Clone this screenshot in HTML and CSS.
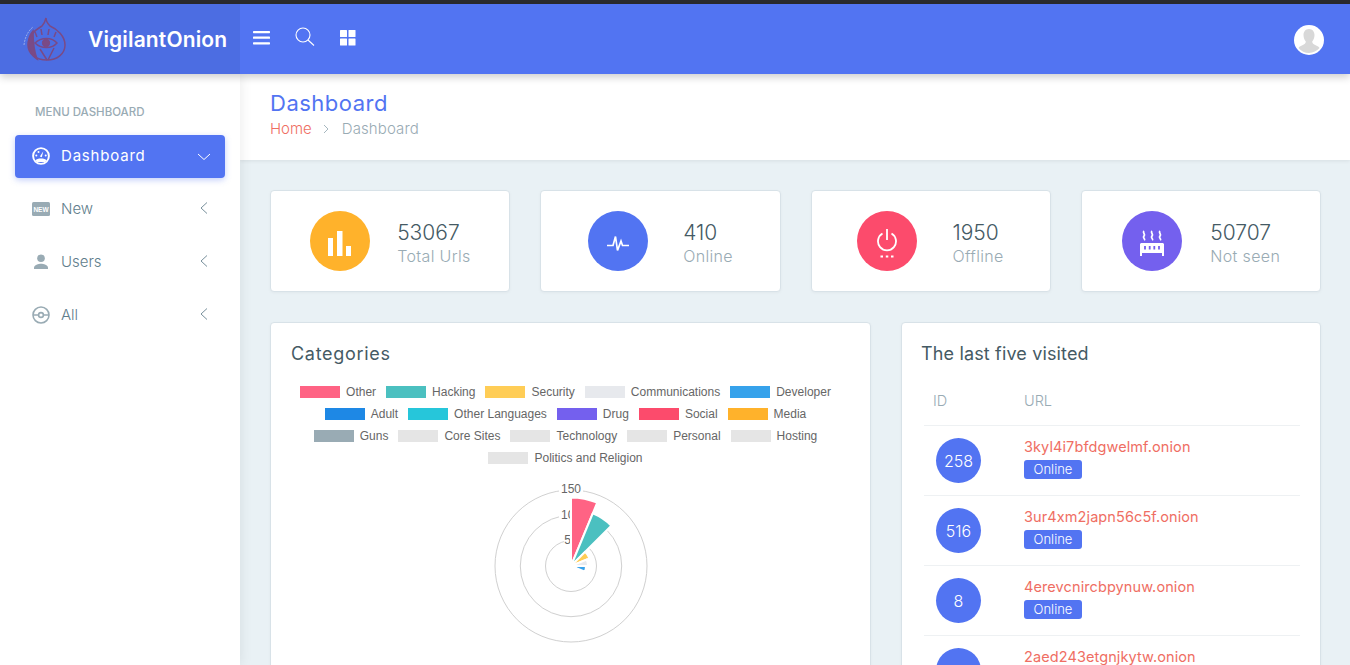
FILE: index.html
```html
<!DOCTYPE html>
<html lang="en">
<head>
<meta charset="utf-8">
<title>VigilantOnion</title>
<link rel="stylesheet" href="styles.css">
</head>
<body>
<div class="strip"></div>
<header class="topbar">
  <div class="brand">
    <svg class="logo" viewBox="0 0 50 50" fill="none" stroke="#7a4a86" stroke-width="1.5">
      <path d="M3 32C4 24 7 18 12 14" stroke="#a9b9ee" stroke-width=".8" stroke-dasharray="2 1"/>
      <path d="M25 5c0 4 2 6 4 8 7 3 15 10 15 19 0 9-8 15-18 15C15 47 7 41 7 32c0-9 7-15 14-19 2-2 3-4 4-8z"/>
      <path d="M12 18C6 25 5 39 16 46c-3-8-4-18-4-28z" fill="#7a4a86"/>
      <path d="M14 30c6-6 17-6 22 0-5 6-16 6-22 0z"/>
      <circle cx="25" cy="30" r="3.400" fill="#7a4a86"/>
      <path d="M16 24l-2-5M21 22l-1-6M27 22l1-6M33 24l2-5M19 36l7 11M33 35l-6 12"/>
    </svg>
    <span class="brand-name">VigilantOnion</span>
  </div>
  <nav class="tools">
    <svg class="tool-menu" viewBox="0 0 18 14" fill="#fff"><rect y="0" width="17" height="2.200" rx=".6"/><rect y="5.600" width="17" height="2.200" rx=".6"/><rect y="11.200" width="17" height="2.200" rx=".6"/></svg>
    <svg class="tool-search" viewBox="0 0 20 20" fill="none" stroke="#fff" stroke-width="1.100"><circle cx="8" cy="8" r="7"/><path d="M13 13l6 5.500"/></svg>
    <svg class="tool-grid" viewBox="0 0 16 16" fill="#fff"><rect width="7" height="7" rx=".5"/><rect x="8.500" width="7" height="7" rx=".5"/><rect y="8.500" width="7" height="7" rx=".5"/><rect x="8.500" y="8.500" width="7" height="7" rx=".5"/></svg>
  </nav>
  <svg class="avatar" viewBox="0 0 30 30"><circle cx="15" cy="15" r="15" fill="#fff"/><path d="M15 4c3.600 0 5.500 2.800 5.500 6 0 2.800-1 5-2.300 6.500 0 2 1.300 2.800 3.500 3.700 2 .8 3.300 1.800 3.800 2.800A15 15 0 0 1 15 28a14 14 0 0 1-10.500-5c.5-1 1.800-2 3.800-2.800 2.200-.9 3.500-1.700 3.500-3.700C10.500 15 9.500 12.800 9.500 10c0-3.200 1.900-6 5.500-6z" fill="#d8d8d8"/></svg>
</header>
<div class="layout">
  <aside class="sidebar">
    <div class="menu-label">MENU DASHBOARD</div>
    <a class="menu-item active">
      <svg class="menu-icon" viewBox="0 0 18 18"><circle cx="9" cy="9" r="7.900" fill="none" stroke="#fff" stroke-width="1.900"/><path d="M3.500 13.500c1.500-2.600 9.500-2.600 11 0l-1.500 1.500H5z" fill="#fff"/><path d="M9.800 10.200L11.300 4.300 7.900 9.400z" fill="#fff"/><circle cx="4.300" cy="8.500" r="1" fill="#fff"/><circle cx="6.500" cy="5" r="1" fill="#fff"/><circle cx="13.700" cy="8.500" r="1" fill="#fff"/></svg>
      <span class="menu-text">Dashboard</span>
      <svg class="chev-down" viewBox="0 0 14 8" fill="none" stroke="#fff" stroke-width="1"><path d="M1 1l6 5.500L13 1"/></svg>
    </a>
    <a class="menu-item">
      <svg class="menu-icon" viewBox="0 0 18 18"><rect y="2" width="18" height="14" rx="1.500" fill="#99abb4"/><text class="new-glyph" x="9" y="11.600" text-anchor="middle">NEW</text></svg>
      <span class="menu-text">New</span>
      <svg class="chev-left" viewBox="0 0 8 14" fill="none" stroke="#78909c" stroke-width="1"><path d="M7 1.500L1 7l6 5.500"/></svg>
    </a>
    <a class="menu-item">
      <svg class="menu-icon" viewBox="0 0 18 18" fill="#99abb4"><circle cx="9" cy="5.300" r="3.800"/><path d="M2 16v-1.500c0-2.500 4.500-3.800 7-3.800s7 1.300 7 3.800V16z"/></svg>
      <span class="menu-text">Users</span>
      <svg class="chev-left" viewBox="0 0 8 14" fill="none" stroke="#78909c" stroke-width="1"><path d="M7 1.500L1 7l6 5.500"/></svg>
    </a>
    <a class="menu-item">
      <svg class="menu-icon" viewBox="0 0 18 18" fill="none" stroke="#99abb4" stroke-width="1.600"><circle cx="9" cy="9" r="8"/><circle cx="9" cy="9" r="2.400"/><path d="M1 9h5.600M11.400 9H17"/></svg>
      <span class="menu-text">All</span>
      <svg class="chev-left" viewBox="0 0 8 14" fill="none" stroke="#78909c" stroke-width="1"><path d="M7 1.500L1 7l6 5.500"/></svg>
    </a>
  </aside>
  <main class="main">
    <section class="crumbs">
      <h1 class="page-title">Dashboard</h1>
      <div class="trail"><span class="trail-home">Home</span><svg class="trail-sep" viewBox="0 0 6 10" fill="none" stroke="#a6b7bf" stroke-width="1"><path d="M1 1l4 4-4 4"/></svg><span class="trail-here">Dashboard</span></div>
    </section>
    <div class="content">
      <div class="stats">
        <div class="card stat">
          <div class="disc orange"><svg class="icon-bars" viewBox="0 0 23 25" fill="#fff"><rect x="0" y="7" width="5" height="18"/><rect x="9" y="0" width="5.500" height="25"/><rect x="18" y="15" width="5" height="10"/></svg></div>
          <div class="stat-text"><div class="stat-num">53067</div><div class="stat-label">Total Urls</div></div>
        </div>
        <div class="card stat">
          <div class="disc blue"><svg class="icon-pulse" viewBox="0 0 22 17" fill="none" stroke="#fff" stroke-width="1.700"><path d="M0 10.500h6l2.500-9 2 14 3.500-9.500 1.500 4.500H22"/></svg></div>
          <div class="stat-text"><div class="stat-num">410</div><div class="stat-label">Online</div></div>
        </div>
        <div class="card stat">
          <div class="disc red"><svg class="icon-power" viewBox="0 0 20 29" fill="none" stroke="#fff" stroke-width="1.800"><path d="M5.500 4.500a9 9 0 1 0 9 0M10 0v11"/><path d="M3.500 27.500h2.500M8.800 27.500h2.500M14 27.500h2.500" stroke-width="2.200"/></svg></div>
          <div class="stat-text"><div class="stat-num">1950</div><div class="stat-label">Offline</div></div>
        </div>
        <div class="card stat">
          <div class="disc purple"><svg class="icon-steam" viewBox="0 0 26 26" fill="none" stroke="#fff" stroke-width="1.800"><path d="M5 1c-2 2 2 3 0 5s2 3 0 4M13 1c-2 2 2 3 0 5s2 3 0 4M21 1c-2 2 2 3 0 5s2 3 0 4"/><path d="M1 14l1-1h22l1 1v12h-2v-3H3v3H1z" fill="#fff" stroke="none"/><path d="M6 16v3.500M10.700 16v3.500M15.300 16v3.500M20 16v3.500" stroke="#7460ee" stroke-width="1.800"/></svg></div>
          <div class="stat-text"><div class="stat-num">50707</div><div class="stat-label">Not seen</div></div>
        </div>
      </div>
      <div class="panels">
        <div class="card panel">
          <h2 class="panel-title spaced">Categories</h2>
          <ul class="legend">
            <li class="legend-row"><i class="swatch c1"></i>Other</li>
            <li class="legend-row"><i class="swatch c2"></i>Hacking</li>
            <li class="legend-row"><i class="swatch c3"></i>Security</li>
            <li class="legend-row"><i class="swatch c4"></i>Communications</li>
            <li class="legend-row"><i class="swatch c5"></i>Developer</li>
            <li class="legend-row"><i class="swatch c6"></i>Adult</li>
            <li class="legend-row"><i class="swatch c7"></i>Other Languages</li>
            <li class="legend-row"><i class="swatch c8"></i>Drug</li>
            <li class="legend-row"><i class="swatch c9"></i>Social</li>
            <li class="legend-row"><i class="swatch c10"></i>Media</li>
            <li class="legend-row"><i class="swatch c11"></i>Guns</li>
            <li class="legend-row"><i class="swatch c12"></i>Core Sites</li>
            <li class="legend-row"><i class="swatch c12"></i>Technology</li>
            <li class="legend-row"><i class="swatch c12"></i>Personal</li>
            <li class="legend-row"><i class="swatch c12"></i>Hosting</li>
            <li class="legend-row"><i class="swatch c12"></i>Politics and Religion</li>
          </ul>
          <svg class="polar" viewBox="-90 -90 180 180">
            <g fill="none" stroke="#d0d0d0" stroke-width="1">
              <circle r="25.500"/><circle r="50.700"/><circle r="76"/>
            </g>
            <g class="polar-ticks" text-anchor="middle">
              <rect x="-12" y="-83" width="24" height="14" fill="#fff"/>
              <text y="-73">150</text>
              <rect x="-12" y="-57" width="24" height="14" fill="#fff"/>
              <text y="-47">100</text>
              <rect x="-7" y="-32" width="14" height="14" fill="#fff"/>
              <text y="-22">50</text>
            </g>
            <g stroke="#fff" stroke-width="2">
              <path d="M0 0L0-68.500A68.500 68.500 0 0 1 26.200-63.300Z" fill="#ff6384"/>
              <path d="M0 0L21.800-52.600A57 57 0 0 1 40.300-40.300Z" fill="#4bc0c0"/>
              <path d="M0 0L14.100-14.100A20 20 0 0 1 18.500-7.700Z" fill="#ffcd56"/>
              <path d="M0 0L15.700-6.500A17 17 0 0 1 17 0Z" fill="#e7e9ed"/>
              <path d="M0 0L15 0A15 15 0 0 1 13.900 5.700Z" fill="#36a2eb"/>
              <path d="M0 0L4.600 1.900A5 5 0 0 1 3.500 3.500Z" fill="#1e88e5"/>
            </g>
          </svg>
        </div>
        <div class="card panel">
          <h2 class="panel-title tight">The last five visited</h2>
          <div class="table">
            <div class="table-row head"><span class="col-id">ID</span><span class="col-url">URL</span></div>
            <div class="table-row"><div class="col-id"><span class="id-disc">258</span></div><div class="col-url"><a class="onion">3kyl4i7bfdgwelmf.onion</a><span class="badge">Online</span></div></div>
            <div class="table-row"><div class="col-id"><span class="id-disc">516</span></div><div class="col-url"><a class="onion">3ur4xm2japn56c5f.onion</a><span class="badge">Online</span></div></div>
            <div class="table-row"><div class="col-id"><span class="id-disc">8</span></div><div class="col-url"><a class="onion">4erevcnircbpynuw.onion</a><span class="badge">Online</span></div></div>
            <div class="table-row"><div class="col-id"><span class="id-disc"></span></div><div class="col-url"><a class="onion">2aed243etgnjkytw.onion</a></div></div>
          </div>
        </div>
      </div>
    </div>
  </main>
</div>
</body>
</html>
```
FILE: styles.css
```css
* { box-sizing: border-box; }
html, body { height: 100%; }
body {
  margin: 0;
  width: 1350px;
  height: 665px;
  overflow: hidden;
  background: #e9f1f5;
  font-family: Inter, "Open Sans", sans-serif;
  color: #455a64;
}
h1, h2, ul { margin: 0; padding: 0; }

.strip { height: 4px; background: #2b2b2f; }
.topbar {
  position: relative;
  z-index: 3;
  height: 70px;
  display: flex;
  align-items: center;
  background: #5274f2;
  box-shadow: 0 3px 8px rgba(0, 0, 0, .2);
}
.brand {
  width: 240px;
  height: 70px;
  flex: none;
  display: flex;
  align-items: center;
  padding-left: 21px;
  background: #4c6de2;
}
.logo { width: 50px; height: 50px; flex: none; margin-top: -2px; }
.brand-name {
  margin-left: 17px;
  font-size: 21px;
  font-weight: 600;
  letter-spacing: .15px;
  color: #fff;
  white-space: nowrap;
}
.tools { display: flex; align-items: center; padding-left: 13px; }
.tool-menu { width: 18px; height: 14px; margin-bottom: 2px; }
.tool-search { width: 20px; height: 20px; margin-left: 24px; margin-bottom: 4px; }
.tool-grid { width: 16px; height: 16px; margin-left: 25px; margin-bottom: 2px; }
.avatar { width: 30px; height: 30px; margin-left: auto; margin-right: 26px; margin-top: 2px; }

.layout { display: flex; height: 591px; }
.sidebar {
  position: relative;
  z-index: 2;
  width: 240px;
  flex: none;
  background: #fff;
  padding: 0 15px;
  box-shadow: 1px 0 12px rgba(0, 0, 0, .08);
}
.menu-label {
  padding: 31px 0 0 20px;
  height: 61px;
  font-size: 11.500px;
  font-weight: 500;
  line-height: 14px;
  color: #99abb4;
}
.menu-item {
  display: flex;
  align-items: center;
  height: 43px;
  margin-bottom: 10px;
  padding: 0 13px 2px 17px;
  border-radius: 4px;
  color: #607d8b;
}
.menu-item.active {
  padding-right: 14px;
  background: #5274f2;
  color: #fff;
  box-shadow: 0 2px 6px rgba(82, 116, 242, .35);
}
.menu-icon { width: 18px; height: 18px; flex: none; }
.new-glyph { font: 800 6.500px "Liberation Sans", sans-serif; fill: #fff; }
.menu-text { margin-left: 11px; font-size: 15px; font-weight: 300; flex: 1; }
.active .menu-text { font-weight: 400; letter-spacing: .8px; }
.chev-down { width: 14px; height: 8px; flex: none; margin-top: 2px; }
.chev-left { width: 8px; height: 14px; flex: none; margin-right: 4px; margin-bottom: 2px; }

.main { flex: 1; min-width: 0; }
.crumbs {
  height: 86px;
  padding: 16px 30px 0;
  background: #fff;
  box-shadow: 0 1px 4px rgba(0, 0, 0, .08);
}
.page-title { font-size: 22px; line-height: 26px; font-weight: 400; color: #5274f2; letter-spacing: .5px; }
.trail { display: flex; align-items: center; margin-top: 3px; font-size: 15px; line-height: 20px; font-weight: 300; }
.trail-home { color: #ef6e63; }
.trail-sep { width: 6px; height: 10px; margin: 0 13px 0 11px; }
.trail-here { color: #99abb4; letter-spacing: .1px; }

.content { padding: 30px 29px 0 30px; }
.stats { display: grid; grid-template-columns: repeat(4, 1fr); gap: 30px; }
.card {
  background: #fff;
  border: 1px solid #d8e2e8;
  border-radius: 4px;
  box-shadow: 0 1px 3px rgba(0, 0, 0, .04);
}
.stat {
  height: 102px;
  padding: 0 11px;
  display: flex;
  align-items: center;
  justify-content: space-evenly;
}
.disc {
  width: 60px;
  height: 60px;
  flex: none;
  border-radius: 50%;
  display: flex;
  align-items: center;
  justify-content: center;
}
.orange { background: #ffb22b; }
.blue { background: #5274f2; }
.red { background: #fc4b6c; }
.purple { background: #7460ee; }
.icon-bars { width: 23px; height: 25px; margin-top: 4px; }
.icon-pulse { width: 22px; height: 17px; margin-top: 4px; }
.icon-power { width: 20px; height: 29px; margin-top: 4px; }
.icon-steam { width: 26px; height: 26px; margin-top: 4px; }
.stat-text { padding-top: 5px; }
.stat-num { font-size: 21px; line-height: 26px; font-weight: 300; color: #455a64; }
.stat-label { font-size: 16px; line-height: 21px; font-weight: 300; color: #99abb4; letter-spacing: .35px; }

.panels { display: grid; grid-template-columns: 1fr 420px; gap: 30px; margin-top: 30px; }
.panel { height: 400px; padding: 20px; overflow: hidden; }
.panel-title { font-size: 18px; line-height: 22px; font-weight: 400; color: #455a64; letter-spacing: .2px; }
.panel-title.spaced { letter-spacing: .7px; }
.panel-title.tight { margin-left: -1px; letter-spacing: .15px; }

.legend {
  list-style: none;
  display: flex;
  flex-wrap: wrap;
  justify-content: center;
  margin-top: 16px;
  font: 12px/22px "Liberation Sans", Arial, sans-serif;
  color: #666;
}
.legend-row { display: flex; align-items: center; margin-right: 10px; white-space: nowrap; }
.swatch { width: 40px; height: 12px; margin-right: 6px; }
.c1 { background: #ff6384; }
.c2 { background: #4bc0c0; }
.c3 { background: #ffcd56; }
.c4 { background: #e7e9ed; }
.c5 { background: #36a2eb; }
.c6 { background: #1e88e5; }
.c7 { background: #26c6da; }
.c8 { background: #7460ee; }
.c9 { background: #fc4b6c; }
.c10 { background: #ffb22b; }
.c11 { background: #99abb4; }
.c12 { background: #e5e5e5; }
.polar { display: block; width: 180px; height: 180px; margin: 7px auto 0; }
.polar-ticks { font: 12px "Liberation Sans", Arial, sans-serif; fill: #666; }

.table { margin: 14px 0 0 2px; }
.table-row {
  display: flex;
  height: 70px;
  border-top: 1px solid #eef1f3;
}
.table-row.head { height: 46px; padding-bottom: 4px; border-top: 0; align-items: center; font-size: 14.500px; font-weight: 300; color: #99abb4; }
.col-id { width: 100px; flex: none; }
.head .col-id { padding-left: 9px; }
.col-url { display: flex; flex-direction: column; align-items: flex-start; }
.id-disc {
  display: flex;
  align-items: center;
  justify-content: center;
  width: 45px;
  height: 45px;
  margin: 12px 0 0 12px;
  border-radius: 50%;
  background: #5274f2;
  color: #fff;
  font-size: 16px;
  font-weight: 300;
}
.onion { margin-top: 12px; font-size: 14.500px; line-height: 18px; color: #ef6e63; letter-spacing: .1px; }
.badge {
  width: 58px;
  height: 19px;
  margin-top: 4px;
  border-radius: 3px;
  background: #5274f2;
  color: #fff;
  font-size: 13px;
  font-weight: 300;
  line-height: 19px;
  text-align: center;
}
```
